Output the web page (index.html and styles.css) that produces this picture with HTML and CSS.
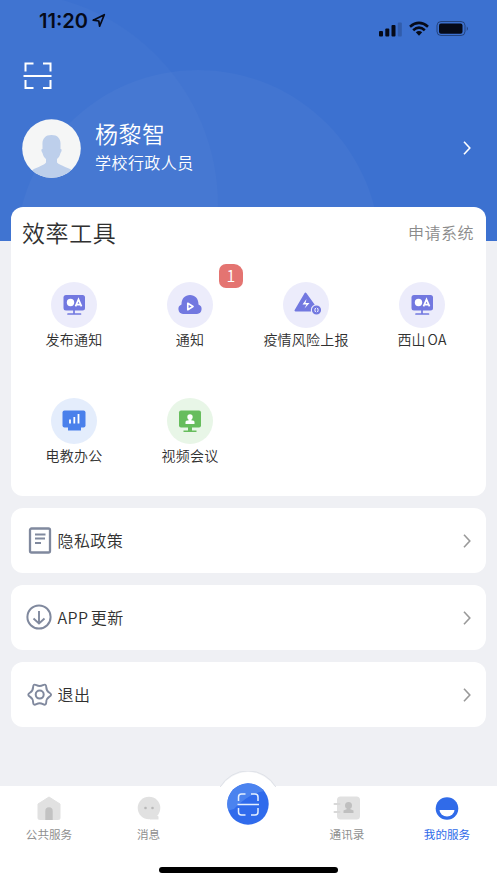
FILE: index.html
```html
<!DOCTYPE html>
<html lang="zh-CN">
<head>
<meta charset="utf-8">
<title>我的服务</title>
<link rel="stylesheet" href="styles.css">
</head>
<body>
<svg class="defs" width="0" height="0">
  <symbol id="oa" viewBox="0 0 46 46">
    <rect x="12.500" y="13" width="21.500" height="15.500" rx="2.500" fill="#7278e0"/>
    <path d="M23 28v4M17 32h12.500" stroke="#7278e0" stroke-width="1.700" stroke-linecap="round"/>
    <circle cx="19.500" cy="20.500" r="3.700" fill="#fff"/>
    <path d="M24.500 24.300 27.500 17.300 30.500 24.300M25.700 22.700h3.600" fill="none" stroke="#fff" stroke-width="1.700"/>
  </symbol>
  <symbol id="chevron" viewBox="0 0 8 14">
    <path d="M1 .8 6.800 7 1 13.200" fill="none" stroke="currentColor" stroke-width="1.600"/>
  </symbol>
</svg>
<div class="screen">
  <header class="hero">
    <svg class="hero-bg" viewBox="0 0 497 241">
      <circle cx="5" cy="205" r="213" fill="#fff" fill-opacity=".025"/>
      <circle cx="198" cy="252" r="182" fill="#fff" fill-opacity=".03"/>
    </svg>
    <div class="status">
      <span class="time">11:20</span>
      <svg class="locate" width="14" height="15" viewBox="0 0 14 15"><path d="M1.200 7.200 12.300 1.700 7.600 13.200 6.800 8Z" fill="none" stroke="#060a18" stroke-width="1.700" stroke-linejoin="round"/></svg>
      <svg class="signals" width="92" height="18" viewBox="0 0 92 18">
        <rect x="0" y="11" width="4" height="5.500" rx="1"/><rect x="6.300" y="8.500" width="4" height="8" rx="1"/><rect x="12.500" y="5" width="4" height="11.500" rx="1"/><rect x="18.800" y="2.500" width="4" height="14" rx="1" opacity=".2"/>
        <g fill="none" stroke="#060a18" stroke-width="2.700"><path d="M31 6.700Q40 -.8 49 6.700"/><path d="M34.200 10.200Q40 5.200 45.800 10.200"/></g>
        <path d="M36.800 12.200Q40 9.800 43.200 12.200L40 15.700Z"/>
        <rect x="58" y="1.500" width="28" height="14" rx="4" fill="none" stroke="#060a18" stroke-opacity=".45"/>
        <rect x="60" y="3.500" width="23.500" height="10.300" rx="2"/><path d="M87.800 6.500q2 2 0 4.500z" opacity=".5"/>
      </svg>
    </div>
    <svg class="scan" width="30" height="28" viewBox="0 0 30 28"><path d="M2.500 9.500V1.500h8M20 1.500h7.500v8M2.500 18v8h8M20 26h7.500v-8M.5 14h28" fill="none" stroke="#fff" stroke-width="2"/></svg>
    <div class="profile">
      <svg class="avatar" width="59" height="59" viewBox="0 0 59 59">
        <clipPath id="face"><circle cx="29.500" cy="29.500" r="29.300"/></clipPath>
        <circle cx="29.500" cy="29.500" r="29.300" fill="#f5f6f6"/>
        <path clip-path="url(#face)" d="M29.500 16C23 16 20 20 20.500 26v4c-1.500 0-1.500 2 0 4 .8 3 1.500 4 3.500 6v3.500C22 47 12 48.500 8 53v8h44v-8c-4-4.500-14-6-17-9.500V40c2-2 2.700-3 3.500-6 1.500-2 1.500-4 0-4v-4c.5-6-2.500-10-9-10Z" fill="#bdcfeb"/>
      </svg>
      <div class="who"><div class="name">杨黎智</div><div class="role">学校行政人员</div></div>
      <svg class="go" width="8" height="14"><use href="#chevron"/></svg>
    </div>
  </header>
  <main>
    <section class="tools">
      <div class="tools-head"><h1>效率工具</h1><span>申请系统</span></div>
      <div class="grid">
        <div class="tool"><svg class="disc violet"><use href="#oa"/></svg><span>发布通知</span></div>
        <div class="tool"><b class="badge">1</b>
          <svg class="disc violet" viewBox="0 0 46 46"><path d="M16 32a5 5 0 0 1-1.500-9.600C14.500 16.500 18 13 23 13s8.500 3.500 8.500 9.400A5 5 0 0 1 30 32Z" fill="#7278e0"/><path d="M20.800 21.300v6.400l5.200-3.200Z" fill="none" stroke="#fff" stroke-width="1.700" stroke-linejoin="round"/></svg><span>通知</span></div>
        <div class="tool"><svg class="disc violet" viewBox="0 0 46 46"><path d="M22.500 11.500 12.500 28.500H28L31.500 24Z" fill="#7278e0" stroke="#7278e0" stroke-width="2" stroke-linejoin="round"/><path d="m23.500 17-4 5.500h4l-2 4 5-5.500h-4z" fill="#fff"/><circle cx="33.500" cy="28" r="5.700" fill="#ececfb"/><circle cx="33.500" cy="28" r="3.400" fill="none" stroke="#7278e0" stroke-width="2.400"/><path d="M33.500 26v4M32 28h3" stroke="#7278e0"/></svg><span>疫情风险上报</span></div>
        <div class="tool"><svg class="disc violet"><use href="#oa"/></svg><span class="mixed">西山 OA</span></div>
        <div class="tool"><svg class="disc blue" viewBox="0 0 46 46"><rect x="11.500" y="12.500" width="23" height="17" rx="2" fill="#4a80eb"/><path d="M17 29h13v3.500H17z" fill="#4a80eb"/><path d="M19 21.500v4M23.300 19v6.500M27.500 16v9.500" stroke="#fff" stroke-width="1.800"/></svg><span>电教办公</span></div>
        <div class="tool"><svg class="disc green" viewBox="0 0 46 46"><rect x="12" y="12.500" width="22" height="17" rx="2" fill="#67bd5d"/><path d="M21 29h4v3.500h4.500v1.500h-13v-1.500H21z" fill="#67bd5d"/><circle cx="23" cy="19" r="2.700" fill="#fff"/><path d="M21.500 20h3v2.500H26q1.500 0 1.500 1.500v2h-9v-2q0-1.500 1.500-1.500h1.500z" fill="#fff"/></svg><span>视频会议</span></div>
      </div>
    </section>
    <section class="row">
      <svg width="26" height="28" viewBox="0 0 26 28" fill="none" stroke="#80899e"><rect x="4" y="1.500" width="20" height="24" rx="1.500" stroke-width="2.300"/><path d="M9 7.500h10.500M9 11.500h10M9 16h6" stroke-width="1.900"/></svg>
      <span>隐私政策</span><svg class="go" width="8" height="14"><use href="#chevron"/></svg>
    </section>
    <section class="row">
      <svg width="26" height="28" viewBox="0 0 26 28" fill="none" stroke="#80899e"><circle cx="13" cy="13" r="11.600" stroke-width="2"/><path d="M13 7v12M7.500 14.500l5.500 5 5.500-5" stroke-width="1.900"/></svg>
      <span class="mixed">APP 更新</span><svg class="go" width="8" height="14"><use href="#chevron"/></svg>
    </section>
    <section class="row">
      <svg width="26" height="28" viewBox="0 0 26 28" fill="none" stroke="#80899e" stroke-width="2"><path transform="translate(1.200 .2) scale(.96)" d="M23.200 12Q26.500 14 23.200 16Q19.930 18 19.840 21.850Q19.750 25.690 16.400 23.850Q13 22 9.600 23.850Q6.250 25.690 6.160 21.850Q6.070 18 2.800 16Q-.5 14 2.800 12Q6.070 10 6.160 6.150Q6.250 2.310 9.600 4.150Q13 6 16.400 4.150Q19.750 2.310 19.840 6.150Q19.930 10 23.200 12Z"/><circle cx="13.700" cy="13.600" r="4"/></svg>
      <span>退出</span><svg class="go" width="8" height="14"><use href="#chevron"/></svg>
    </section>
  </main>
  <nav class="tabs">
    <div class="tab"><svg width="24" height="24" viewBox="0 0 24 24"><path d="M12 1 23 8v14q0 1.500-1.500 1.500h-19Q1 23.500 1 22V8Z" fill="#e1e1e1" stroke="#e1e1e1" stroke-linejoin="round"/><path d="M8.300 24V15a3.700 3.700 0 0 1 7.400 0v9Z" fill="#c2c2c2"/></svg><span>公共服务</span></div>
    <div class="tab"><svg width="24" height="24" viewBox="0 0 24 24"><circle cx="12" cy="12" r="11.300" fill="#e1e1e1"/><path d="M13 22l6-3 2.500 1.500v3H13z" fill="#e1e1e1"/><circle cx="8.500" cy="12" r="1.300" fill="#b8b8b8"/><circle cx="15.500" cy="12" r="1.300" fill="#b8b8b8"/></svg><span>消息</span></div>
    <div class="tab center"><svg class="bump" width="64" height="64" viewBox="0 0 64 64"><circle cx="32" cy="32.500" r="31.500" fill="#fff"/><path d="M4.200 16A32 32 0 0 1 59.800 16" fill="none" stroke="#dfe2e8"/><circle cx="32" cy="33" r="20.700" fill="#306bec"/><path d="M12.300 39.500A20.700 20.700 0 0 1 48 20Q32 23 18 38Z" fill="#4b83ef"/><path d="M22.500 30v-4q0-3 3-3h4M35 23h4q3 0 3 3v4M22.500 37v4q0 3 3 3h4M35 44h4q3 0 3-3v-4M21.500 33.500h21.500" fill="none" stroke="#e4efff" stroke-width="1.500"/></svg></div>
    <div class="tab"><svg width="28" height="24" viewBox="0 0 28 24"><rect x="4" y=".5" width="23" height="23" rx="3.500" fill="#e1e1e1"/><path d="M1.500 8h5M1.500 16h5" stroke="#d8d8d8" stroke-width="2" stroke-linecap="round"/><circle cx="15.500" cy="9.500" r="3.500" fill="#bfbfbf"/><path d="M14 10h3v3l3.500 1.500V17h-10v-2.500L14 13Z" fill="#bfbfbf"/></svg><span>通讯录</span></div>
    <div class="tab active"><svg width="24" height="24" viewBox="0 0 24 24"><circle cx="12" cy="12.500" r="11.300" fill="#306be9"/><path d="M4.500 14h15a7.500 6.500 0 0 1-15 0Z" fill="#fff"/></svg><span>我的服务</span></div>
    <div class="home"></div>
  </nav>
</div>
</body>
</html>
```
FILE: styles.css
```css
* { box-sizing: border-box; }
body { margin: 0; font-family: "Noto Sans CJK SC", sans-serif; font-weight: 350; color: #303030; }
svg { display: block; flex: none; }
.defs { position: absolute; }
.screen { width: 497px; height: 883px; display: flex; flex-direction: column; background: #eff0f4; overflow: hidden; }
.hero { position: relative; height: 241px; flex: none; background: #3c71d0; color: #fff; }
.hero-bg { position: absolute; inset: 0; width: 497px; height: 241px; }
.status, .scan, .profile { position: relative; }
.status { display: flex; height: 62px; padding: 10px 26px 0 39px; color: #060a18; fill: #060a18; }
.time { font: 600 20px/22px Inter, sans-serif; letter-spacing: 0; }
.locate { margin: 3px 0 0 4px; }
.signals { margin: 10px 0 0 auto; }
.scan { margin-left: 23px; }
.profile { display: flex; align-items: center; height: 60px; margin-top: 28px; padding: 0 26px 0 22px; }
.who { margin: -4px 0 0 14px; }
.name { font-size: 23px; line-height: 32px; letter-spacing: .5px; }
.role { font-size: 16px; line-height: 26px; letter-spacing: .45px; }
.go { margin-left: auto; color: #999; }
.profile .go { color: #fff; }
main { position: relative; flex: 1; display: flex; flex-direction: column; gap: 12px; margin: -34.500px 11px 0; }
.tools, .row { flex: none; background: #fff; border-radius: 12px; }
.tools { height: 289.500px; }
.tools-head { display: flex; align-items: center; justify-content: space-between; height: 51px; padding: 0 12px 0 11px; }
h1 { margin: 0; font-size: 23px; font-weight: 350; letter-spacing: .6px; }
.tools-head span { font-size: 16px; letter-spacing: .5px; color: #8b8b8b; }
.grid { display: grid; grid-template-columns: repeat(4, 116px); grid-auto-rows: 116px; margin: 24px 0 0 5px; }
.tool { position: relative; display: flex; flex-direction: column; align-items: center; font-size: 14px; line-height: 22px; letter-spacing: .2px; white-space: nowrap; }
.disc { width: 46px; height: 46px; border-radius: 50%; }
.violet { background: #ececfb; }
.blue { background: #e4edfc; }
.green { background: #e8f6e7; }
.badge { position: absolute; right: 5px; top: -17.500px; width: 24px; height: 24px; border-radius: 7px 9px 7px 7px; background: #e47471; color: #fff; font-size: 16px; font-weight: 350; line-height: 23px; text-align: center; }
.row { display: flex; align-items: center; height: 65px; padding: 0 15px; font-size: 16px; letter-spacing: .4px; }
.row span { margin: -2px 0 0 5.500px; }
.mixed { word-spacing: -1.500px; }
.tabs { position: relative; flex: none; display: grid; grid-template-columns: 98px 101px 98px 100px 100px; height: 97px; background: #fff; }
.tab { display: flex; flex-direction: column; align-items: center; padding-top: 10px; font-size: 11.600px; line-height: 18px; font-weight: 400; color: #8f8f8f; }
.tab span { margin-top: 5px; }
.active { color: #306be9; }
.center { padding: 0; }
.bump { margin-top: -15px; }
.home { position: absolute; left: 159px; bottom: 10px; width: 179px; height: 6px; border-radius: 3px; background: #000; }
```
